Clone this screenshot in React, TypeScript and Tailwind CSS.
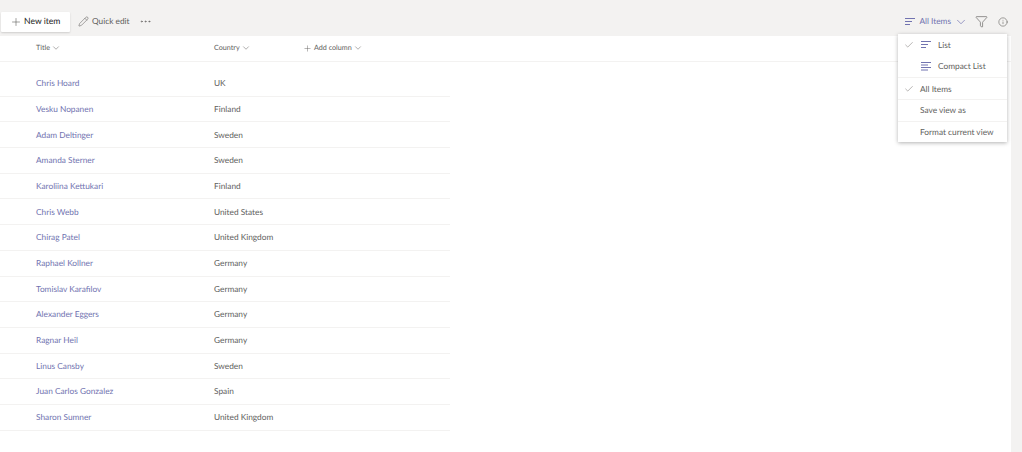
import { ChevronDown, Check, Plus, Pencil, Ellipsis, Filter, Info } from 'lucide-react';

const people = [
  ['Chris Hoard', 'UK'],
  ['Vesku Nopanen', 'Finland'],
  ['Adam Deltinger', 'Sweden'],
  ['Amanda Sterner', 'Sweden'],
  ['Karoliina Kettukari', 'Finland'],
  ['Chris Webb', 'United States'],
  ['Chirag Patel', 'United Kingdom'],
  ['Raphael Kollner', 'Germany'],
  ['Tomislav Karafilov', 'Germany'],
  ['Alexander Eggers', 'Germany'],
  ['Ragnar Heil', 'Germany'],
  ['Linus Cansby', 'Sweden'],
  ['Juan Carlos Gonzalez', 'Spain'],
  ['Sharon Sumner', 'United Kingdom'],
];

function Lines({ compact }: { compact?: boolean }) {
  return (
    <svg width="10" height="9" viewBox="0 0 10 9" className="stroke-[#7173b0]" fill="none" strokeWidth="1">
      {compact ? (
        <path d="M0 .5h10M0 3h7M0 5.5h10M0 8h7" />
      ) : (
        <path d="M0 1.5h10M0 4.5h7M0 7.5h5" />
      )}
    </svg>
  );
}

function MenuRow({ label, checked, icon, border }: { label: string; checked?: boolean; icon?: React.ReactNode; border?: boolean }) {
  return (
    <div className={`flex h-[21.7px] items-center ${border ? 'border-t border-[#f3f2f1]' : ''}`}>
      <div className="flex w-[22px] shrink-0 justify-start pl-[6px]">
        {checked && <Check size={10} strokeWidth={1.3} className="text-[#7a7876]" />}
      </div>
      {icon && <div className="mr-[7px] flex w-[11px] justify-center">{icon}</div>}
      <span>{label}</span>
    </div>
  );
}

export default function App() {
  return (
    <div className="relative flex h-[452px] w-[1022px] flex-col overflow-hidden bg-[#f3f2f1] font-['Lato',sans-serif] text-[8.3px] text-[#605e5c] [text-rendering:geometricPrecision]">
      <div className="flex h-9 shrink-0 items-center justify-between pt-[7px] pr-[14px] pl-px">
        <div className="flex items-center">
          <div className="flex h-[20px] w-[69px] items-center gap-[2px] rounded-[1px] bg-white pl-[9px] text-[8.6px] text-[#252423] shadow-[0_1px_2px_rgba(0,0,0,0.15)]">
            <Plus size={12} strokeWidth={1.2} className="text-[#605e5c]" />
            <span>New item</span>
          </div>
          <div className="ml-2 flex items-center gap-[3px] text-[#605e5c]">
            <Pencil size={11} strokeWidth={1.2} />
            <span>Quick edit</span>
          </div>
          <Ellipsis size={13} strokeWidth={1.2} className="ml-[9px] text-[#605e5c]" />
        </div>
        <div className="flex items-center">
          <Lines />
          <span className="ml-[4px] text-[#7173b0]">All Items</span>
          <ChevronDown size={14} strokeWidth={1.2} className="ml-[3px] text-[#7173b0]" />
          <Filter size={13} strokeWidth={1.2} className="ml-[7px] text-[#605e5c]" />
          <Info size={10} strokeWidth={1.4} className="ml-[10px] text-[#605e5c]" />
        </div>
      </div>

      <div className="mr-[11px] flex-1 bg-white">
        <div className="flex h-[26px] items-center border-b border-[#f3f2f1] pl-9 text-[7.2px] text-[#605e5c]">
          <div className="flex w-[178px] items-center gap-[1px]">
            Title <ChevronDown size={10} strokeWidth={1.2} />
          </div>
          <div className="flex w-[89px] items-center gap-[1px]">
            Country <ChevronDown size={10} strokeWidth={1.2} />
          </div>
          <div className="flex items-center gap-[1px]">
            <Plus size={9} strokeWidth={1.2} className="mr-[1px]" /> Add column <ChevronDown size={10} strokeWidth={1.2} />
          </div>
        </div>
        <div className="w-[450px] pt-[9px]">
          {people.map(([name, country]) => (
            <div key={name} className="flex h-[25.7px] items-center border-b border-[#f3f2f1] pl-9">
              <div className="w-[178px] text-[#7173b0]">{name}</div>
              <div className="text-[#605e5c]">{country}</div>
            </div>
          ))}
        </div>
      </div>

      <div className="absolute top-[34px] left-[898px] w-[109px] bg-white text-[#605e5c] shadow-[0_1px_4px_rgba(0,0,0,0.3)]">
        <MenuRow label="List" checked icon={<Lines />} />
        <MenuRow label="Compact List" icon={<Lines compact />} />
        <MenuRow label="All Items" checked border />
        <MenuRow label="Save view as" border />
        <MenuRow label="Format current view" border />
      </div>
    </div>
  );
}
